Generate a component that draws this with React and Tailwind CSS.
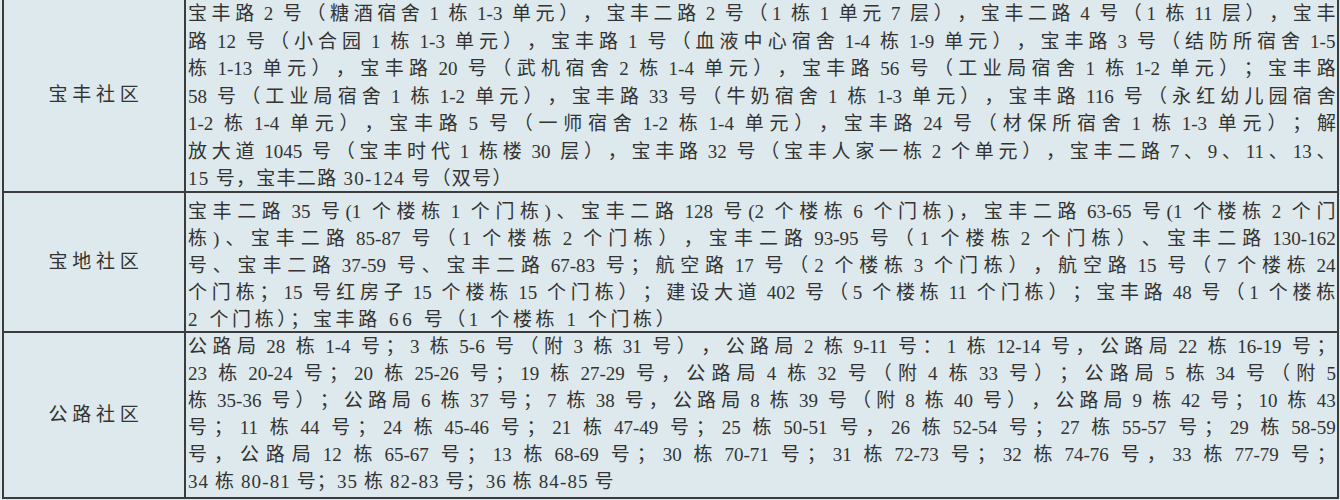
const rows = [
  {
    name: '宝丰社区',
    box: 'h-[191px] leading-[27.5px]',
    last: 'tracking-[1.3px]',
    lines: [
      '宝丰路 2 号（糖酒宿舍 1 栋 1-3 单元），宝丰二路 2 号（1 栋 1 单元 7 层），宝丰二路 4 号（1 栋 11 层），宝丰',
      '路 12 号（小合园 1 栋 1-3 单元），宝丰路 1 号（血液中心宿舍 1-4 栋 1-9 单元），宝丰路 3 号（结防所宿舍 1-5',
      '栋 1-13 单元），宝丰路 20 号（武机宿舍 2 栋 1-4 单元），宝丰路 56 号（工业局宿舍 1 栋 1-2 单元）；宝丰路',
      '58 号（工业局宿舍 1 栋 1-2 单元），宝丰路 33 号（牛奶宿舍 1 栋 1-3 单元），宝丰路 116 号（永红幼儿园宿舍',
      '1-2 栋 1-4 单元），宝丰路 5 号（一师宿舍 1-2 栋 1-4 单元），宝丰路 24 号（材保所宿舍 1 栋 1-3 单元）；解',
      '放大道 1045 号（宝丰时代 1 栋楼 30 层），宝丰路 32 号（宝丰人家一栋 2 个单元），宝丰二路 7、9、11、13、',
      '15 号，宝丰二路 30-124 号（双号）',
    ],
  },
  {
    name: '宝地社区',
    box: 'h-[138px] pt-[5px] leading-[27px]',
    last: 'tracking-[3.6px]',
    lines: [
      '宝丰二路 35 号(1 个楼栋 1 个门栋)、宝丰二路 128 号(2 个楼栋 6 个门栋)，宝丰二路 63-65 号(1 个楼栋 2 个门',
      '栋)、宝丰二路 85-87 号（1 个楼栋 2 个门栋），宝丰二路 93-95 号（1 个楼栋 2 个门栋）、宝丰二路 130-162',
      '号、宝丰二路 37-59 号、宝丰二路 67-83 号；航空路 17 号（2 个楼栋 3 个门栋），航空路 15 号（7 个楼栋 24',
      '个门栋；15 号红房子 15 个楼栋 15 个门栋）；建设大道 402 号（5 个楼栋 11 个门栋）；宝丰路 48 号（1 个楼栋',
      '2 个门栋）；宝丰路 66 号（1 个楼栋 1 个门栋）',
    ],
  },
  {
    name: '公路社区',
    box: 'h-[164px] leading-[27px]',
    last: 'tracking-[1.1px]',
    lines: [
      '公路局 28 栋 1-4 号；3 栋 5-6 号（附 3 栋 31 号），公路局 2 栋 9-11 号：1 栋 12-14 号，公路局 22 栋 16-19 号；',
      '23 栋 20-24 号；20 栋 25-26 号；19 栋 27-29 号，公路局 4 栋 32 号（附 4 栋 33 号）；公路局 5 栋 34 号（附 5',
      '栋 35-36 号）；公路局 6 栋 37 号；7 栋 38 号，公路局 8 栋 39 号（附 8 栋 40 号），公路局 9 栋 42 号；10 栋 43',
      '号；11 栋 44 号；24 栋 45-46 号；21 栋 47-49 号；25 栋 50-51 号，26 栋 52-54 号；27 栋 55-57 号；29 栋 58-59',
      '号，公路局 12 栋 65-67 号；13 栋 68-69 号；30 栋 70-71 号；31 栋 72-73 号；32 栋 74-76 号，33 栋 77-79 号；',
      '34 栋 80-81 号；35 栋 82-83 号；36 栋 84-85 号',
    ],
  },
];

// split a line into single CJK chars and ascii runs, remembering where a space was
function tokenize(line) {
  const out = [];
  let space = false;
  for (const m of line.matchAll(/\s+|[A-Za-z0-9\-.()]+|./gu)) {
    const s = m[0];
    if (/^\s+$/.test(s)) {
      space = true;
      continue;
    }
    out.push({ text: s, space });
    space = false;
  }
  return out;
}

function FullLine({ text }) {
  return (
    <div className="flex justify-between whitespace-nowrap">
      {tokenize(text).map((t, i) => (
        <span key={i} className={t.space ? 'pl-[5px]' : ''}>
          {t.text}
        </span>
      ))}
    </div>
  );
}

export default function App() {
  return (
    <div className="w-[1340px] h-[500px] overflow-hidden bg-[#dde9ec] text-[#333] font-['Liberation_Serif','Noto_Sans_CJK_SC',serif]">
      <div className="ml-[2px] w-[1337px] border-x-2 border-b-2 border-[#3c3c3c]">
        {rows.map((row, i) => (
          <div
            key={row.name}
            className={`grid grid-cols-[182px_1fr] ${i > 0 ? 'border-t-2 border-[#3c3c3c]' : ''}`}
          >
            <div className="flex items-center justify-center border-r-2 border-[#3c3c3c] text-[19px] tracking-[4.7px] pl-[4px]">
              {row.name}
            </div>
            <div className={`${row.box} pl-[2px] pr-[1px] text-[19px]`}>
              {row.lines.map((line, j) =>
                j < row.lines.length - 1 ? (
                  <FullLine key={j} text={line} />
                ) : (
                  <div key={j} className={`whitespace-nowrap ${row.last}`}>
                    {line}
                  </div>
                )
              )}
            </div>
          </div>
        ))}
      </div>
    </div>
  );
}
